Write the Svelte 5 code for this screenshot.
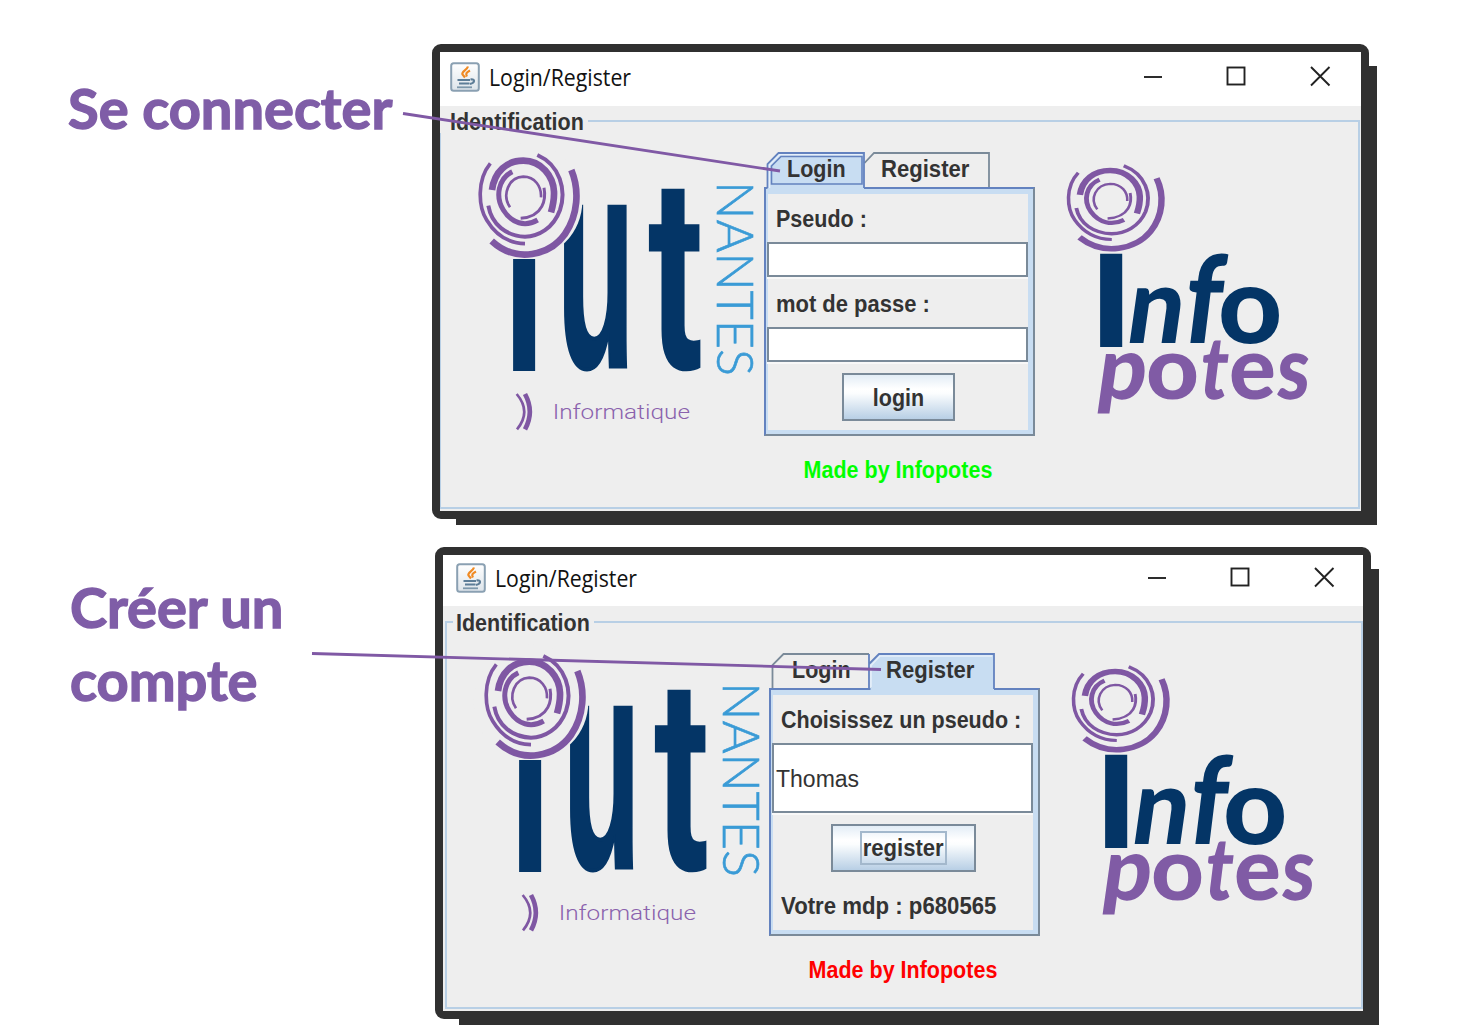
<script>
  const windows = [
    { id: 'login', heading: ['Se connecter'], active: 'login', credit: 'ok' },
    { id: 'register', heading: ['Créer un', 'compte'], active: 'register', credit: 'alert' }
  ];
</script>

{#snippet javaIcon()}
  <svg class="java" viewBox="0 0 30 30" aria-hidden="true">
    <defs>
      <linearGradient id="tile" x1="0" y1="0" x2="0" y2="1">
        <stop offset="0" stop-color="#ffffff" />
        <stop offset="1" stop-color="#dde4ea" />
      </linearGradient>
    </defs>
    <rect x="1.2" y="1.2" width="27.6" height="27.6" rx="2.5" fill="url(#tile)" stroke="#8aa0b2" stroke-width="2" />
    <path d="M18 4.500 C17 8 11 9.500 12.500 12.500 L15 15.500 M20 8.500 C16 10.500 15.500 12 17 14.500" fill="none" stroke="#f08a24" stroke-width="2.200" />
    <path d="M7.500 18 H20 M9 21.500 H19.500 M20.500 17.500 C25.500 16.500 25 21 20 22" fill="none" stroke="#5d7d97" stroke-width="2.200" />
    <path d="M7 25.300 H22" stroke="#7d97ab" stroke-width="1.800" />
  </svg>
{/snippet}

{#snippet rings()}
  <g fill="none" stroke="#7f57a3">
    <path stroke-width="20" d="M304 90 C329 150 324 225 285 282 C240 345 140 372 65 303" />
    <path stroke-width="11" d="M61 70 C20 120 25 200 50 240 C80 290 120 310 165 311" />
    <path stroke-width="12" d="M202 45 C270 75 290 150 270 210 C250 265 205 290 165 290 C110 288 65 255 55 197" />
    <path stroke-width="20" d="M66 150 C73 95 110 62 160 62 C215 62 250 110 252 155 C253 180 248 200 243 217" />
    <path stroke-width="15" d="M127 95 C85 115 75 170 100 210 C125 250 165 262 203 240" />
    <path stroke-width="8" d="M120 202 C95 165 115 112 160 110 C195 110 215 140 213 172" />
    <path stroke-width="9" d="M222 143 C228 175 222 230 152 235" />
  </g>
{/snippet}

{#snippet iutLogo()}
  <svg class="iut" viewBox="24 36 855 855" role="img" aria-label="IUT Nantes Informatique">
    <g class="navy heavy">
      <text transform="translate(95 692) scale(.759 1)" font-size="634">ı</text>
      <text class="thick" transform="translate(261 680) scale(.42 1)" font-size="908">u</text>
      <text class="slab" transform="translate(534 686) scale(.6 1)" font-size="820">t</text>
    </g>
    <ellipse cx="165" cy="183" rx="172" ry="174" fill="#eee" />
    {@render rings()}
    <text class="nantes" transform="translate(742 124) rotate(90)" font-size="154" textLength="584" lengthAdjust="spacingAndGlyphs">NANTES</text>
    <g fill="none" stroke="#7f57a3">
      <path stroke-width="8" d="M140 762 Q185 815 141 868" />
      <path stroke-width="14" d="M165 762 Q194 815 165 868" />
    </g>
    <text class="dept" x="248" y="836" font-size="62" textLength="412" lengthAdjust="spacingAndGlyphs">Informatique</text>
  </svg>
{/snippet}

{#snippet potesLogo()}
  <svg class="potes" viewBox="78 6 735 810" role="img" aria-label="Infopotes">
    <g transform="translate(55.800 9.700) scale(.967 .833)">{@render rings()}</g>
    <g class="navy heavy">
      <text transform="translate(146 590) scale(.91 1)" font-size="530">ı</text>
    </g>
    <g class="navy round">
      <text transform="translate(252 579) skewX(-8) scale(.94 1)" font-size="318">n</text>
      <text transform="translate(422 579) skewX(-7) scale(.84 1)" font-size="364">f</text>
      <text transform="translate(534 579) scale(1.05 1)" font-size="318">o</text>
    </g>
    <g class="violet round">
      <text transform="translate(164 748) skewX(-8) scale(.98 1)" font-size="262">p</text>
      <text transform="translate(318 748) scale(1.05 1)" font-size="262">o</text>
      <text transform="translate(472 748) skewX(-7) scale(.82 1)" font-size="262">t</text>
      <text transform="translate(567 748) scale(1 1)" font-size="262">e</text>
      <text transform="translate(706 748) skewX(-4) scale(.85 1)" font-size="262">s</text>
    </g>
  </svg>
{/snippet}

{#snippet tabShapes(active)}
  <svg class="shapes" viewBox="0 0 271 42" aria-hidden="true">
    {#if active === 'login'}
      <path d="M100.500 11 L110 1 H225 V35" fill="none" stroke="#7a8a99" stroke-width="1.800" />
      <path d="M3.500 42 V12 L14.500 1 H100 V42" fill="#c8ddf2" />
      <path d="M3.500 36 V12 L14.500 1 H100 V36" fill="none" stroke="#6382bf" stroke-width="1.800" />
      <path d="M5.500 36 V13 L15.500 2.800 H98" fill="none" stroke="#e6effa" stroke-width="1.500" />
      <path d="M7.500 32 V14 L17 4.500 H98 V32 Z" fill="none" stroke="#6382bf" stroke-width="1.600" />
    {:else}
      <path d="M3.500 35 V12 L14.500 1 H100" fill="none" stroke="#7a8a99" stroke-width="1.800" />
      <path d="M101.500 42 V11 L111 1 H225 V42" fill="#c8ddf2" />
      <path d="M100 1 V35 M100 11 L110 1 H225 V36" fill="none" stroke="#6382bf" stroke-width="1.800" />
      <path d="M102 34 V12.500 L111 3 H223" fill="none" stroke="#e6effa" stroke-width="1.500" />
    {/if}
  </svg>
{/snippet}

<main>
  {#each windows as win}
    <section class="step {win.id}">
      <h1>
        {#each win.heading as line}<span>{line}</span>{/each}
      </h1>
      <div class="frame">
        <div class="window">
          <header>
            {@render javaIcon()}
            <span class="title">Login/Register</span>
            <svg class="controls" viewBox="0 0 190 22" aria-hidden="true">
              <g fill="none" stroke="#222" stroke-width="1.900">
                <path d="M1 11 H19" />
                <rect x="84.500" y="1.500" width="17" height="17" />
                <path d="M168 1 L186.500 19.500 M186.500 1 L168 19.500" />
              </g>
            </svg>
          </header>
          <div class="group">
            <div class="legend"><span class="ui">Identification</span></div>
            <div class="row">
              {@render iutLogo()}
              <div class="center">
                <div class="tabs">
                  {@render tabShapes(win.active)}
                  <span class="ui tab">Login</span>
                  <span class="ui tab">Register</span>
                </div>
                <div class="panel">
                  <div class="form">
                    {#if win.active === 'login'}
                      <label><span class="ui">Pseudo :</span></label>
                      <div class="field"></div>
                      <label><span class="ui wider">mot de passe :</span></label>
                      <div class="field"></div>
                      <button><span class="ui">login</span></button>
                    {:else}
                      <label><span class="ui">Choisissez un pseudo :</span></label>
                      <div class="field tall"><span class="ui value">Thomas</span></div>
                      <button class="wide"><span class="focus"><span class="ui">register</span></span></button>
                      <label class="result"><span class="ui">Votre mdp : p680565</span></label>
                    {/if}
                  </div>
                </div>
                <p class={win.credit}><span class="ui">Made by Infopotes</span></p>
              </div>
              {@render potesLogo()}
            </div>
          </div>
        </div>
      </div>
    </section>
  {/each}
  <svg class="callouts" viewBox="0 0 1477 1034" aria-hidden="true">
    <path d="M403 113.500 L780 171 M312 653.500 L881 669.500" stroke="#8059a5" stroke-width="2.800" fill="none" />
  </svg>
</main>

<style>
  :global(body) { background: #fff; }
  main {
    position: relative;
    box-sizing: border-box;
    width: 1477px;
    height: 1034px;
    padding-top: 44px;
    overflow: hidden;
    display: flex;
    flex-direction: column;
    gap: 28px;
    font-family: "Liberation Sans", Arial, sans-serif;
    color: #333;
  }
  .callouts { position: absolute; inset: 0; z-index: 2; width: 1477px; height: 1034px; }
  .step { display: flex; align-items: flex-start; }
  h1 {
    margin: 0;
    box-sizing: border-box;
    flex: none;
    width: 432px;
    padding: 27px 0 0 68px;
    font: 700 56px/73px Lato, sans-serif;
    color: #7f5da7;
    -webkit-text-stroke: 1.4px #7f5da7;
    white-space: nowrap;
  }
  h1 span { display: block; width: max-content; }
  .register h1 { width: 435px; padding: 23px 0 0 70px; }

  .frame { flex: none; border: 8px solid #303030; border-radius: 9px; background: #303030; }
  .window {
    box-sizing: border-box;
    width: 921px;
    height: 459px;
    display: flex;
    flex-direction: column;
    background: #eee;
    box-shadow: 16px 14px 0 #303030;
  }
  .register .window { width: 920px; height: 456px; }

  header {
    box-sizing: border-box;
    flex: none;
    height: 54px;
    padding: 0 0 5px 10px;
    display: flex;
    align-items: center;
    background: #fff;
    color: #111;
  }
  .register header { height: 51px; padding: 0 0 6px 13px; }
  .java { width: 30px; height: 30px; flex: none; }
  .title {
    margin-left: 9px;
    font: 400 23px/30px "Open Sans", sans-serif;
    transform: scaleX(.925);
    transform-origin: left;
    white-space: nowrap;
  }
  .controls { width: 190px; height: 22px; margin-left: auto; margin-right: 28px; flex: none; }
  .register .controls { margin-right: 26px; }

  .group {
    flex: 1;
    margin: 14px 1px 2px 0;
    border: 2px solid #b8cfe5;
    border-left-width: 1px;
    min-height: 0;
  }
  .register .group { margin: 15px 0 2px 2px; border-left-width: 2px; }
  .legend {
    width: max-content;
    height: 24px;
    margin: -13px 0 -11px -1px;
    padding: 0 5px 0 10px;
    line-height: 26px;
    background: #eee;
  }
  .legend .ui { display: block; width: 133px; }
  .register .legend { margin-left: 6px; padding-left: 3px; }
  .row { display: flex; padding: 30px 0 0 37px; }

  .ui {
    display: inline-block;
    font-size: 23px;
    font-weight: 700;
    white-space: nowrap;
    transform: scaleX(.935);
    transform-origin: left;
  }
  .wider { transform: scaleX(.955); }

  .iut { width: 285px; height: 285px; flex: none; margin-right: 1px; overflow: visible; }
  .register .iut { margin-right: 0; }
  .potes { width: 245px; height: 270px; flex: none; margin-left: 31px; overflow: visible; }
  .navy { fill: #043566; }
  .violet { fill: #805ba5; }
  .heavy { font-family: "Liberation Sans", sans-serif; font-weight: 700; }
  .thick { stroke: #043566; stroke-width: 3px; vector-effect: non-scaling-stroke; }
  .slab { font-family: Roboto, sans-serif; }
  .round { font-family: Lato, sans-serif; font-weight: 900; }
  .nantes { font-family: Lato, sans-serif; font-weight: 300; fill: #3a9bd6; stroke: #3a9bd6; stroke-width: 2px; }
  .dept { font-family: Roboto, sans-serif; font-weight: 300; fill: #8a62ad; }

  .center { width: 271px; flex: none; }
  .tabs { position: relative; z-index: 1; height: 35px; display: flex; }
  .shapes { position: absolute; left: 0; top: 0; width: 271px; height: 42px; }
  .tab { position: relative; line-height: 35px; margin-left: 23px; width: 58px; }
  .tab + .tab { margin-left: 36px; transform: scaleX(.96); }
  .panel {
    box-sizing: border-box;
    height: 249px;
    border: 2px solid;
    border-color: #6382bf #7a8a99 #7a8a99 #6382bf;
    background: #c8ddf2;
    padding: 5px 5px 4px 2px;
  }
  .register .panel { height: 248px; }
  .form { height: 100%; background: #eee; display: flex; flex-direction: column; }
  label { flex: none; height: 48px; line-height: 50px; padding-left: 8px; }
  .field + label { height: 50px; line-height: 54px; }
  .field {
    box-sizing: border-box;
    flex: none;
    height: 35px;
    margin-left: -1px;
    border: 2px solid #7a8a99;
    background: #fff;
    width: 261px;
    box-shadow: 0 2px 0 #f8f8f8;
  }
  .field.tall { height: 70px; line-height: 68px; padding-left: 2px; }
  .value { font-weight: 400; transform: scaleX(1); }
  button {
    box-sizing: border-box;
    flex: none;
    width: 113px;
    height: 48px;
    margin: 11px 0 0 74px;
    padding: 0;
    border: 2px solid #7a8a99;
    font-family: inherit;
    color: #333;
    background: linear-gradient(#e3edf6 0%, #fff 32%, #fbfdfe 42%, #b8cfe5 100%);
  }
  button .ui { transform-origin: center; line-height: 46px; }
  button.wide { width: 145px; margin: 11px 0 0 58px; }
  .focus { display: inline-block; border: 2px solid #a3b8cc; width: 83px; height: 30px; }
  .focus .ui { line-height: 31px; margin: 0 -6px; transform: scaleX(.96); }
  .result { height: 66px; line-height: 68px; }
  .result .ui { transform: scaleX(.965); }
  p { margin: 19px 3px 0 0; line-height: 30px; text-align: center; }
  p .ui { transform-origin: center; }
  .ok { color: #00ff00; }
  .alert { color: #ff0000; }
</style>
